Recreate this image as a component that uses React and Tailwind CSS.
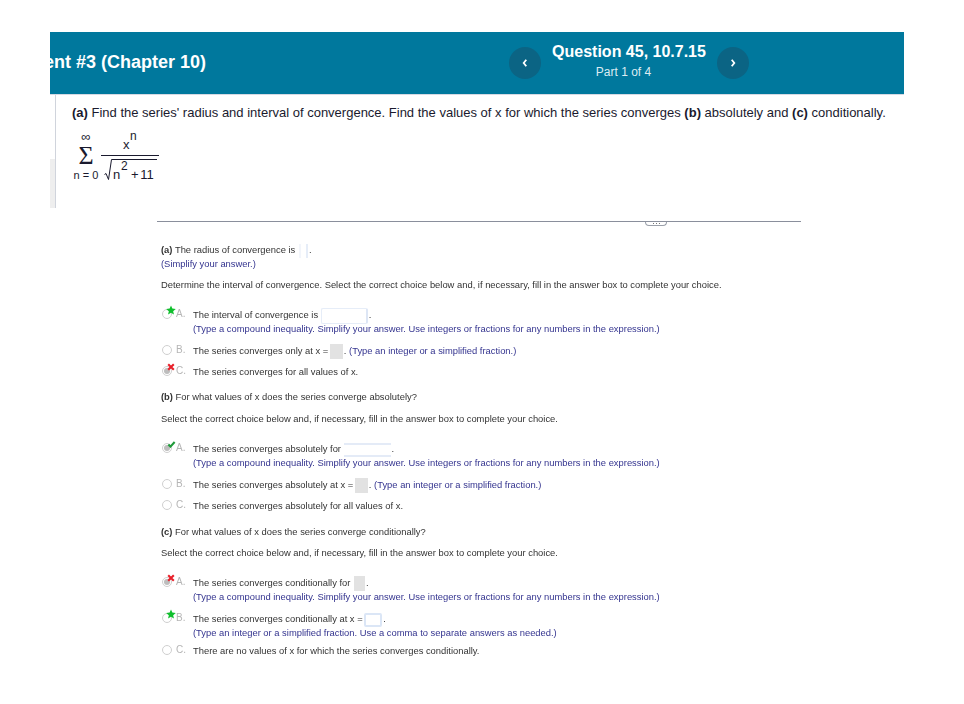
const Radio = ({ on }) => (
  <span className="flex h-[10px] w-[10px] shrink-0 items-center justify-center rounded-full border border-[#cfcfcf] bg-white">
    {on && <span className="h-[6px] w-[6px] rounded-full bg-[#bdbdbd]" />}
  </span>
);

const Star = () => (
  <svg className="absolute left-[5px] top-[-2px]" width="10" height="10" viewBox="0 0 24 24">
    <path fill="#0fbf2c" d="M12 1l3.2 7.6 8.3.7-6.3 5.4 1.9 8.1L12 18.5l-7.1 4.3 1.9-8.1L.5 9.3l8.3-.7z" />
  </svg>
);
const Cross = () => (
  <svg className="absolute left-[6px] top-[-1px]" width="8" height="8" viewBox="0 0 10 10">
    <path stroke="#e8202a" strokeWidth="2.6" fill="none" d="M1.5 1.5l7 7M8.5 1.5l-7 7" />
  </svg>
);
const Check = () => (
  <svg className="absolute left-[6px] top-[0px]" width="9" height="7" viewBox="0 0 12 10">
    <path stroke="#1f9a3a" strokeWidth="3" fill="none" d="M1.5 5l3 3 6-6.5" />
  </svg>
);

const Instr = ({ children }) => <div className="text-[#34348f]">{children}</div>;

const Gray = ({ size }) => <span className={`-my-1 inline-block h-[15px] ${size} bg-[#e2e2e2] align-middle`} />;

const Option = ({ letter, on, mark, className, children }) => (
  <div className={`flex ${className}`}>
    <div className="relative -mt-[1px] flex h-[14px] w-[32px] shrink-0 items-center gap-[4px] pl-[1px]">
      <Radio on={on} />
      <span className="text-[10px] text-[#b5b5b5]">{letter}.</span>
      {mark}
    </div>
    <div>{children}</div>
  </div>
);

export default function App() {
  return (
    <div className="h-[704px] w-[964px] overflow-hidden bg-white pl-[50px] pt-[32px] font-['Liberation_Sans',Arial,sans-serif]">
      <div className="w-[854px]">
        <header className="flex h-[62px] items-center bg-[#00789d] text-white">
          <div className="-mt-[2px] flex w-[156px] justify-end overflow-hidden whitespace-nowrap text-[18px] font-bold leading-[22px]">
            Assignment #3 (Chapter 10)
          </div>
          <button className="ml-[303px] flex h-[32px] w-[32px] items-center justify-center rounded-full bg-[#0b6484]">
            <svg width="8" height="10" viewBox="0 0 8 10"><path d="M5.3 1.8L2.7 5l2.6 3.2" fill="none" stroke="#fff" strokeWidth="1.8" /></svg>
          </button>
          <div className="-mt-[3px] flex w-[176px] flex-col items-center">
            <div className="text-[16px] font-bold leading-[20px]">Question 45, 10.7.15</div>
            <div className="mt-[1px] pr-[11px] text-[12px] leading-[18px] text-[#dcecf2]">Part 1 of 4</div>
          </div>
          <button className="flex h-[32px] w-[32px] items-center justify-center rounded-full bg-[#0b6484]">
            <svg width="8" height="10" viewBox="0 0 8 10"><path d="M2.7 1.8L5.3 5 2.7 8.2" fill="none" stroke="#fff" strokeWidth="1.8" /></svg>
          </button>
        </header>

        <div className="flex h-[114px] border-t border-t-[#d5d9e3]">
          <div className="flex w-[5px] shrink-0 flex-col justify-end">
            <div className="h-[49px] bg-[#eeeeee]" />
          </div>
          <div className="min-w-0 flex-1 border-l border-l-[#d0d4dc] pl-[16px] pt-[8px] text-[#1a1a2e]">
            <div className="whitespace-nowrap text-[13px] leading-[20px]">
              <b>(a)</b> Find the series' radius and interval of convergence. Find the values of x for which the series converges <b>(b)</b> absolutely and <b>(c)</b> conditionally.
            </div>
            <div className="mt-[8px] flex">
              <div className="flex w-[28px] flex-col items-center">
                <div className="h-[12px] text-[13px] leading-[12px]">∞</div>
                <div className="h-[25px] font-['Liberation_Serif',serif] text-[26px] leading-[25px]">Σ</div>
                <div className="whitespace-nowrap text-[11px] leading-[14px]">n = 0</div>
              </div>
              <div className="ml-[1px] flex w-[58px] flex-col">
                <div className="relative h-[25px] border-b border-b-[#1a1a2e]">
                  <span className="absolute bottom-[3px] left-[22px] text-[13px] leading-[14px]">x</span>
                  <span className="absolute bottom-[12px] left-[29px] text-[12px] leading-[14px]">n</span>
                </div>
                <div className="ml-[3px] mt-[3px] flex">
                  <svg width="8" height="22" viewBox="0 0 8 22" className="shrink-0">
                    <path d="M.5 15.5L2 14.5l2.5 6L7.5.5H8" fill="none" stroke="#1a1a2e" strokeWidth="1" />
                  </svg>
                  <div className="relative h-[22px] w-[45px] border-t border-t-[#1a1a2e] text-[13px]">
                    <span className="absolute left-[1px] top-[7px] leading-[16px]">n</span>
                    <span className="absolute left-[9px] top-[-1px] text-[12px] leading-[14px]">2</span>
                    <span className="absolute left-[19px] top-[7px] whitespace-nowrap leading-[16px] [word-spacing:-2px]">+ 11</span>
                  </div>
                </div>
              </div>
            </div>
          </div>
        </div>
      </div>

      <div className="relative ml-[107px] mt-[13px] w-[644px] border-t border-t-[#8a8f9c]">
        <div className="absolute left-[488px] top-0 flex h-[4px] w-[22px] items-center justify-center gap-[2px] rounded-b-[4px] border border-t-0 border-[#9a9fa9] bg-white">
          <span className="h-[1px] w-[1px] bg-[#777]" />
          <span className="h-[1px] w-[1px] bg-[#777]" />
          <span className="h-[1px] w-[1px] bg-[#777]" />
        </div>
      </div>

      <div className="ml-[111px] mt-[21px] whitespace-nowrap text-[9.4px] leading-[14px] text-[#333] blur-[0.25px]">
        <div>
          <b>(a)</b> The radius of convergence is{" "}
          <span className="-my-1 mx-[1px] inline-block h-[14px] w-[9px] border-x-2 border-x-[#e6edf8] border-l-[#f2f5fb] align-middle" />.
        </div>
        <Instr>(Simplify your answer.)</Instr>
        <div className="mt-[7px]">Determine the interval of convergence. Select the correct choice below and, if necessary, fill in the answer box to complete your choice.</div>

        <Option className="mt-[16px]" letter="A" mark={<Star />}>
          <div>
            The interval of convergence is{" "}
            <span className="-my-1 mr-[1px] inline-block h-[16px] w-[47px] rounded-[2px] border border-[#e6edf8] border-r-2 border-r-[#dde6f5] align-middle" />.
          </div>
          <Instr>(Type a compound inequality. Simplify your answer. Use integers or fractions for any numbers in the expression.)</Instr>
        </Option>
        <Option className="mt-[8px]" letter="B">
          The series converges only at x = <Gray size="-ml-[1px] mr-[1px] w-[13px]" />. <span className="text-[#34348f]">(Type an integer or a simplified fraction.)</span>
        </Option>
        <Option className="mt-[7px]" letter="C" on mark={<Cross />}>
          The series converges for all values of x.
        </Option>

        <div className="mt-[11px]"><b>(b)</b> For what values of x does the series converge absolutely?</div>
        <div className="mt-[8px]">Select the correct choice below and, if necessary, fill in the answer box to complete your choice.</div>

        <Option className="mt-[16px]" letter="A" on mark={<Check />}>
          <div>
            The series converges absolutely for{" "}
            <span className="-my-1 mr-[1px] inline-block h-[14px] w-[47px] border-y-2 border-y-[#e4ebf7] align-middle" />.
          </div>
          <Instr>(Type a compound inequality. Simplify your answer. Use integers or fractions for any numbers in the expression.)</Instr>
        </Option>
        <Option className="mt-[8px]" letter="B">
          The series converges absolutely at x = <Gray size="-ml-[1px] mr-[1px] w-[13px]" />. <span className="text-[#34348f]">(Type an integer or a simplified fraction.)</span>
        </Option>
        <Option className="mt-[7px]" letter="C">
          The series converges absolutely for all values of x.
        </Option>

        <div className="mt-[12px]"><b>(c)</b> For what values of x does the series converge conditionally?</div>
        <div className="mt-[7px]">Select the correct choice below and, if necessary, fill in the answer box to complete your choice.</div>

        <Option className="mt-[16px]" letter="A" on mark={<Cross />}>
          <div>The series converges conditionally for <Gray size="mx-[1px] w-[11px]" />.</div>
          <Instr>(Type a compound inequality. Simplify your answer. Use integers or fractions for any numbers in the expression.)</Instr>
        </Option>
        <Option className="mt-[8px]" letter="B" mark={<Star />}>
          <div>
            The series converges conditionally at x ={" "}
            <span className="-my-1 -ml-[1px] mr-[1px] inline-block h-[14px] w-[18px] rounded-[2px] border-2 border-[#dbe6f6] bg-white align-middle" />.
          </div>
          <Instr>(Type an integer or a simplified fraction. Use a comma to separate answers as needed.)</Instr>
        </Option>
        <Option className="mt-[4px]" letter="C">
          There are no values of x for which the series converges conditionally.
        </Option>
      </div>
    </div>
  );
}
